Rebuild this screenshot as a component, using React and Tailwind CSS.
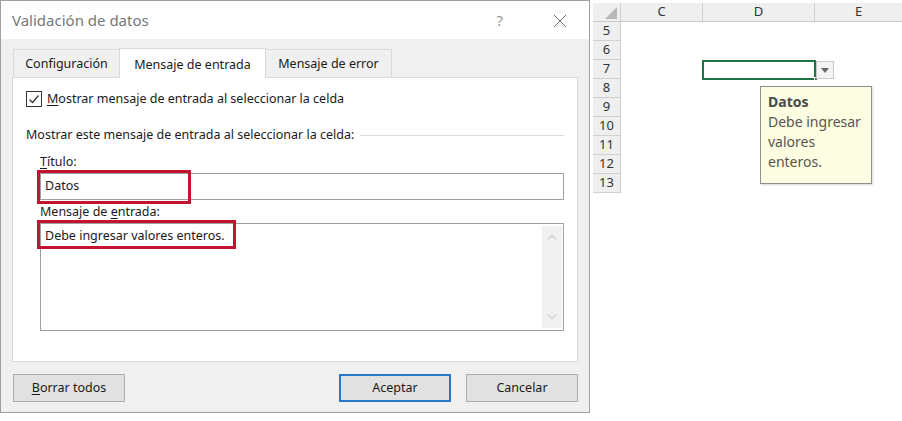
import React from "react";

const ui = { fontFamily: '"Noto Sans", "Open Sans", sans-serif' };
const xl = { fontFamily: '"Noto Sans", "Open Sans", sans-serif' };

function Tab({ label, active, first }) {
  if (active) {
    return (
      <div className="relative z-10 -mb-px h-[30px] w-[147px] bg-white border border-b-0 border-[#d9d9d9] flex items-center justify-center pt-[3px] text-[12.5px] text-[#1a1a1a]">
        {label}
      </div>
    );
  }
  return (
    <div
      className={`h-[28px] bg-[#f0f0f0] border border-b-0 border-[#d9d9d9] flex items-center justify-center pt-[2px] text-[12.5px] text-[#1a1a1a] ${
        first ? "w-[106px] ml-px border-r-0" : "w-[126px] border-l-0"
      }`}
    >
      {label}
    </div>
  );
}

function Button({ children, primary, className = "" }) {
  return (
    <button
      className={`h-[28px] w-[112px] bg-[#e1e1e1] text-[12.5px] text-[#1a1a1a] flex items-center justify-center pt-px ${
        primary ? "border-2 border-[#2a78c5]" : "border border-[#adadad]"
      } ${className}`}
    >
      {children}
    </button>
  );
}

function Dialog() {
  return (
    <div className="w-[590px] h-[413px] border border-[#a0a0a0] bg-[#f0f0f0] flex flex-col shrink-0" style={ui}>
      {/* Title bar */}
      <div className="h-[39px] bg-white flex items-center pl-[11px] pr-[20px] pt-px">
        <span className="text-[15px] text-[#777777]">Validación de datos</span>
        <span className="ml-auto text-[15px] text-[#9a9a9a] mr-[50px]">?</span>
        <svg width="14" height="14" viewBox="0 0 14 14" className="mr-[2px]">
          <path d="M1 1 L13 13 M13 1 L1 13" stroke="#6a6a6a" strokeWidth="1" fill="none" />
        </svg>
      </div>

      <div className="flex-1 px-[11px] pt-[9px] pb-[10px] flex flex-col">
        {/* Tabs */}
        <div className="flex items-end h-[29px]">
          <Tab label="Configuración" first />
          <Tab label="Mensaje de entrada" active />
          <Tab label="Mensaje de error" />
        </div>

        {/* Panel */}
        <div className="h-[285px] w-[566px] bg-white border border-[#d9d9d9] pl-[13px] pr-[12px] text-[12.5px] text-[#1a1a1a]">
          <div className="mt-[13px] h-[16px] flex items-center">
            <div className="w-[16px] h-[16px] border border-[#333333] flex items-center justify-center">
              <svg width="12" height="12" viewBox="0 0 12 12">
                <path d="M1.5 6.5 L4.5 9.5 L10.5 2.5" stroke="#333333" strokeWidth="1.2" fill="none" />
              </svg>
            </div>
            <span className="ml-[5px]">
              <span className="underline underline-offset-2">M</span>ostrar mensaje de entrada al seleccionar la celda
            </span>
          </div>

          <div className="mt-[20px] h-[16px] flex items-center">
            <span className="whitespace-nowrap">Mostrar este mensaje de entrada al seleccionar la celda:</span>
            <div className="flex-1 h-px bg-[#dcdcdc] ml-[6px] mr-[1px]" />
          </div>

          <div className="pl-[14px] pr-[1px]">
            <div className="mt-[11px] h-[16px] flex items-center">
              <span>
                <span className="underline underline-offset-2">T</span>ítulo:
              </span>
            </div>
            <div className="relative mt-[3px] h-[27px] border border-[#a0a0a0] flex items-center pl-[4px]">
              <span>Datos</span>
              <div className="absolute -left-[4px] -top-[4px] w-[154px] h-[34px] border-[3px] border-[#c4122f]" />
            </div>

            <div className="mt-[4px] h-[16px] flex items-center">
              <span>
                Mensaje de <span className="underline underline-offset-2">e</span>ntrada:
              </span>
            </div>
            <div className="relative mt-[3px] h-[108px] border border-[#a0a0a0] flex">
              <div className="flex-1 pl-[4px] pt-[3px]">Debe ingresar valores enteros.</div>
              <div className="w-[20px] my-[2px] mr-[1px] bg-[#f0f0f0] flex flex-col items-center justify-between py-[8px]">
                <svg width="10" height="6" viewBox="0 0 10 6">
                  <path d="M1 5.5 L5 1.5 L9 5.5" stroke="#b5b5b5" strokeWidth="1" fill="none" />
                </svg>
                <svg width="10" height="6" viewBox="0 0 10 6">
                  <path d="M1 0.5 L5 4.5 L9 0.5" stroke="#b5b5b5" strokeWidth="1" fill="none" />
                </svg>
              </div>
              <div className="absolute -left-[4px] -top-[4px] w-[199px] h-[29px] border-[3px] border-[#c4122f]" />
            </div>
          </div>
        </div>

        {/* Buttons */}
        <div className="mt-[12px] flex items-center">
          <Button className="ml-px">
            <span>
              <span className="underline underline-offset-2">B</span>orrar todos
            </span>
          </Button>
          <Button primary className="ml-auto">Aceptar</Button>
          <Button className="ml-[15px]">Cancelar</Button>
        </div>
      </div>
    </div>
  );
}

const rows = [5, 6, 7, 8, 9, 10, 11, 12, 13];

function Sheet() {
  return (
    <div className="relative flex-1 pt-[3px] pl-[3px]" style={xl}>
      {/* column headers */}
      <div className="flex h-[19px] bg-[#efefef] border-b border-[#c8c8c8] text-[13px] text-[#333333]">
        <div className="w-[28px] border-r border-[#d0d0d0] flex items-end justify-end pr-[3px] pb-[2px]">
          <svg width="12" height="12" viewBox="0 0 12 12">
            <path d="M12 0 L12 12 L0 12 Z" fill="#b8b8b8" />
          </svg>
        </div>
        <div className="w-[82px] border-r border-[#d0d0d0] flex items-center justify-center">C</div>
        <div className="w-[112px] border-r border-[#d0d0d0] flex items-center justify-center">D</div>
        <div className="flex-1 flex items-center justify-center">E</div>
      </div>
      {rows.map((r) => (
        <div key={r} className="flex h-[19px]">
          <div className="w-[28px] bg-[#efefef] border-b border-r border-[#d0d0d0] flex items-center justify-center text-[13px] text-[#333333]">
            {r}
          </div>
          <div className="flex-1 bg-white" />
        </div>
      ))}

      {/* selected cell D7 */}
      <div className="absolute left-[112px] top-[60px] w-[114px] h-[20px] border-2 border-[#217346]" />
      <div className="absolute left-[224px] top-[77px] w-[4px] h-[4px] bg-[#217346] border border-white" />
      {/* dropdown button */}
      <div className="absolute left-[226px] top-[61px] w-[18px] h-[18px] bg-[#f4f4f4] border border-[#c8c8c8] flex items-center justify-center">
        <svg width="8" height="5" viewBox="0 0 8 5">
          <path d="M0 0 L8 0 L4 5 Z" fill="#666666" />
        </svg>
      </div>
      {/* input tooltip */}
      <div className="absolute left-[170px] top-[86px] w-[112px] h-[98px] bg-[#fdfde1] border border-[#8e8e8e] shadow-[1px_1px_2px_rgba(0,0,0,0.15)] pl-[7px] pt-[5px] text-[14px] leading-[20px] text-[#555555]">
        <div className="font-bold text-[#4a4a4a]">Datos</div>
        <div>Debe ingresar</div>
        <div>valores</div>
        <div>enteros.</div>
      </div>
    </div>
  );
}

export default function App() {
  return (
    <div className="w-[902px] h-[421px] bg-white flex overflow-hidden">
      <Dialog />
      <Sheet />
    </div>
  );
}
